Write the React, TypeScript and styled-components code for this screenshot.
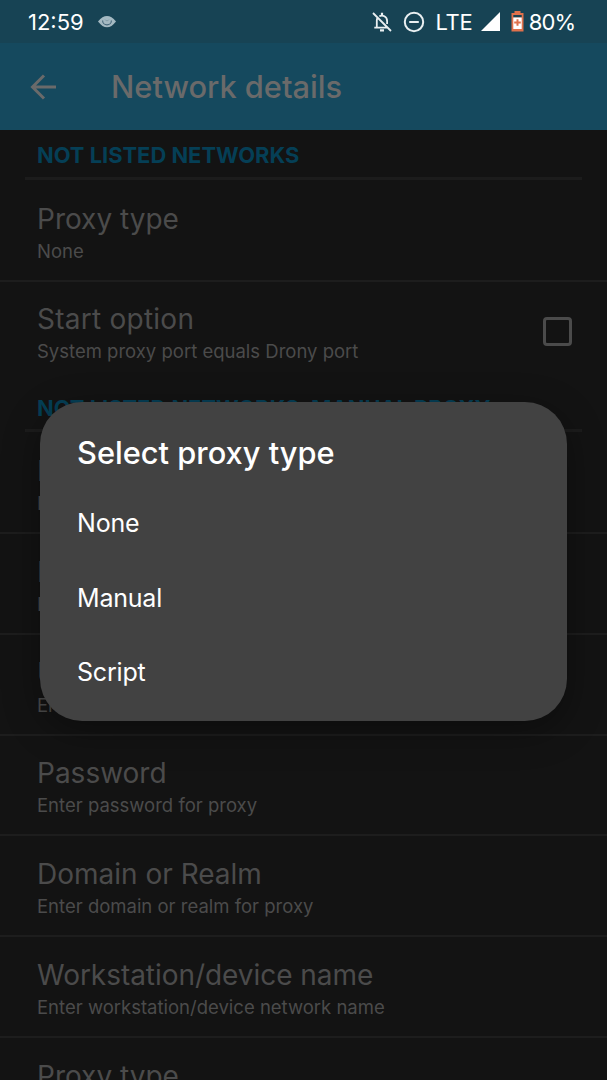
import React from "react";
import styled, { createGlobalStyle } from "styled-components";

const Global = createGlobalStyle`
  * { box-sizing: border-box; }
  html, body { margin: 0; background: #131313; }
  body { font-family: Inter, Roboto, sans-serif; overflow: hidden; }
`;

const Screen = styled.div`
  position: relative;
  width: 607px;
  height: 1080px;
  overflow: hidden;
  background: #131313;
  white-space: nowrap;
`;

const StatusBar = styled.header`
  display: flex;
  align-items: center;
  justify-content: space-between;
  height: 43px;
  padding: 0 31px 0 28px;
  background: #174354;
  color: #fff;
  font-size: 22px;
`;

const StatusGroup = styled.div<{ $gap: number }>`
  display: flex;
  align-items: center;
  gap: ${(p) => p.$gap}px;
`;

const StatusText = styled.span<{ $spacing?: number }>`
  font-weight: 400;
  letter-spacing: ${(p) => p.$spacing ?? 0}px;
  margin-right: ${(p) => -(p.$spacing ?? 0)}px;
`;

const AppBar = styled.div`
  display: flex;
  align-items: center;
  height: 87px;
  padding-left: 30px;
  gap: 54px;
  background: #15495e;
  color: #6a6a6a;
`;

const AppTitle = styled.h1`
  margin: 0;
  font-size: 30.8px;
  font-weight: 500;
`;

const SectionHeader = styled.h2`
  height: 49.8px;
  margin: 0 25px 1px;
  padding: 11.4px 12px 0;
  border-bottom: 3px solid #1c1c1c;
  color: #053f56;
  font-size: 21.9px;
  line-height: 28px;
  font-weight: 700;
`;

const Row = styled.div<{ $divided?: boolean }>`
  display: flex;
  align-items: center;
  justify-content: space-between;
  height: 100.8px;
  padding: 6px 35px 0 37px;
  border-bottom: 2px solid ${(p) => (p.$divided ? "#1d1d1d" : "transparent")};
`;

const RowTitle = styled.div<{ $spacing?: number }>`
  font-size: 28px;
  line-height: 36px;
  letter-spacing: ${(p) => p.$spacing ?? 0}px;
  color: #4b4b4b;
`;

const RowSummary = styled.div`
  font-size: 18.5px;
  line-height: 29px;
  color: #4b4b4b;
`;

const Checkbox = styled.div`
  width: 29px;
  height: 29px;
  margin-bottom: 5px;
  border: 3px solid #4b4b4b;
  border-radius: 4px;
`;

const Dialog = styled.section`
  position: absolute;
  left: 40px;
  top: 402px;
  width: 527px;
  height: 319px;
  padding: 31px 37px 0;
  border-radius: 42px;
  background: #424242;
  color: #fff;
  box-shadow: 0 10px 36px rgba(0, 0, 0, 0.35);
`;

const DialogTitle = styled.h2`
  margin: 0 0 13.4px;
  font-size: 30.8px;
  line-height: 40px;
  font-weight: 500;
`;

const Option = styled.div`
  height: 74.3px;
  line-height: 74.3px;
  font-size: 25px;
  letter-spacing: -0.2px;
`;

type Item = { title: string; summary: string; checkbox?: boolean; spacing?: number };

const general: Item[] = [
  { title: "Proxy type", summary: "None" },
  { title: "Start option", summary: "System proxy port equals Drony port", checkbox: true, spacing: 0.25 },
];

const manual: Item[] = [
  { title: "Hostname", summary: "Enter proxy hostname" },
  { title: "Port", summary: "Enter proxy port" },
  { title: "Username", summary: "Enter username for proxy" },
  { title: "Password", summary: "Enter password for proxy" },
  { title: "Domain or Realm", summary: "Enter domain or realm for proxy" },
  { title: "Workstation/device name", summary: "Enter workstation/device network name", spacing: -0.04 },
  { title: "Proxy type", summary: "HTTP" },
];

function Preferences({ items }: { items: Item[] }) {
  return (
    <>
      {items.map((it, i) => (
        <Row key={it.title} $divided={i < items.length - 1}>
          <div>
            <RowTitle $spacing={it.spacing}>{it.title}</RowTitle>
            <RowSummary>{it.summary}</RowSummary>
          </div>
          {it.checkbox && <Checkbox />}
        </Row>
      ))}
    </>
  );
}

export default function App() {
  return (
    <Screen>
      <Global />
      <StatusBar>
        <StatusGroup $gap={13}>
          <StatusText>12:59</StatusText>
          <svg width="20" height="14" viewBox="0 0 20 14">
            <path d="M1 6.5C4 2.5 7 1 10 1S16 2.5 19 6.5C16 10.5 13 12.3 10 12.3S4 10.5 1 6.5Z" fill="#a4b9c2" />
            <path d="M5.6 5.5a4.4 4.4 0 0 0 8.8 0" fill="none" stroke="#45677a" strokeWidth="1.1" />
            <path d="M8 4.5a2.2 2.2 0 0 0 4 0" fill="none" stroke="#7d99a5" strokeWidth="0.8" />
          </svg>
        </StatusGroup>
        <StatusGroup $gap={11}>
          <svg width="20" height="20" viewBox="0 0 20 20" fill="none" stroke="#e9eff1" strokeWidth="1.8">
            <path d="M1 1L19 19M2.3 15.6H15.5M4.8 15.5V8.5Q4.8 7 5.5 6M7.3 4.2Q10 2.9 12.4 4.2Q15.1 5.7 15.1 9V12" />
            <path d="M10 .8V4M8 18.4H12" strokeWidth="2.2" />
          </svg>
          <svg width="22" height="22" viewBox="0 0 22 22" fill="none" stroke="#e9eff1" strokeWidth="2">
            <circle cx="11" cy="11" r="9.2" />
            <path d="M6.2 11H15.8" />
          </svg>
          <StatusGroup $gap={8}>
            <StatusText $spacing={-0.3}>LTE</StatusText>
            <svg width="19" height="19" viewBox="0 0 20 20">
              <path d="M0 20L20 0V20Z" fill="#fff" />
            </svg>
          </StatusGroup>
          <StatusGroup $gap={5}>
            <svg width="13" height="21" viewBox="0 0 13 21">
              <path d="M3.5 0H9.5V2H12.5V20.5H.5V2H3.5Z" fill="#df714c" />
              <path d="M2.3 4H10.7V6.5H2.3Z" fill="#174354" />
              <path d="M2.3 6.5H10.7V18H2.3Z" fill="#fff" />
              <path d="M6.5 8.2V14.8M3.2 11.5H9.8" stroke="#df714c" strokeWidth="2" />
            </svg>
            <StatusText $spacing={-0.9}>80%</StatusText>
          </StatusGroup>
        </StatusGroup>
      </StatusBar>
      <AppBar>
        <svg width="27" height="26" viewBox="0 0 27 26" fill="none" stroke="#6a6a6a" strokeWidth="3">
          <path d="M26 13H3M14 1.5L2.5 13L14 24.5" />
        </svg>
        <AppTitle>Network details</AppTitle>
      </AppBar>
      <SectionHeader>NOT LISTED NETWORKS</SectionHeader>
      <Preferences items={general} />
      <SectionHeader>NOT LISTED NETWORKS, MANUAL PROXY</SectionHeader>
      <Preferences items={manual} />
      <Dialog role="dialog">
        <DialogTitle>Select proxy type</DialogTitle>
        <Option>None</Option>
        <Option>Manual</Option>
        <Option>Script</Option>
      </Dialog>
    </Screen>
  );
}
